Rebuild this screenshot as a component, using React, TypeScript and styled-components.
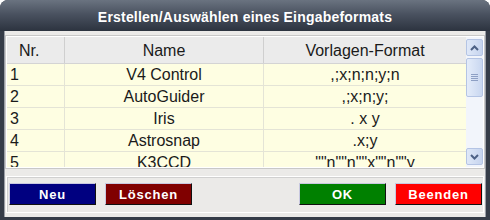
import styled, { createGlobalStyle } from "styled-components";

const GlobalStyle = createGlobalStyle`
  html, body {
    margin: 0;
    padding: 0;
    background: #ffffff;
  }
  * {
    box-sizing: border-box;
  }
`;

type Format = {
  nr: number;
  name: string;
  pattern: string;
};

const formats: Format[] = [
  { nr: 1, name: "V4 Control", pattern: ",;x;n;n;y;n" },
  { nr: 2, name: "AutoGuider", pattern: ",;x;n;y;" },
  { nr: 3, name: "Iris", pattern: ". x y" },
  { nr: 4, name: "Astrosnap", pattern: ".x;y" },
  { nr: 5, name: "K3CCD", pattern: '""n""n""x""n""y' },
];

type Tone = "navy" | "maroon" | "green" | "red";

const toneColors: Record<Tone, string> = {
  navy: "#000080",
  maroon: "#800000",
  green: "#008000",
  red: "#ff0000",
};

export default function App() {
  return (
    <>
      <GlobalStyle />
      <StyledWindow>
        <StyledTitleBar>Erstellen/Auswählen eines Eingabeformats</StyledTitleBar>
        <StyledClient>
          <StyledListFrame>
            <StyledTable>
              <StyledHeaderRow>
                <StyledHeaderCell $align="left">Nr.</StyledHeaderCell>
                <StyledHeaderCell>Name</StyledHeaderCell>
                <StyledHeaderCell $last>Vorlagen-Format</StyledHeaderCell>
              </StyledHeaderRow>
              <StyledBody>
                {formats.map((f) => (
                  <StyledRow key={f.nr}>
                    <StyledCell $align="left">{f.nr}</StyledCell>
                    <StyledCell>{f.name}</StyledCell>
                    <StyledCell $last>{f.pattern}</StyledCell>
                  </StyledRow>
                ))}
              </StyledBody>
            </StyledTable>
            <StyledScrollbar>
              <StyledScrollButton>
                <Chevron up />
              </StyledScrollButton>
              <StyledTrack>
                <StyledThumb>
                  <StyledGrip />
                </StyledThumb>
              </StyledTrack>
              <StyledScrollButton>
                <Chevron />
              </StyledScrollButton>
            </StyledScrollbar>
          </StyledListFrame>
          <StyledButtonPanel>
            <StyledButtonGroup>
              <StyledButton $tone="navy">Neu</StyledButton>
              <StyledButton $tone="maroon">Löschen</StyledButton>
            </StyledButtonGroup>
            <StyledButtonGroup>
              <StyledButton $tone="green">OK</StyledButton>
              <StyledButton $tone="red">Beenden</StyledButton>
            </StyledButtonGroup>
          </StyledButtonPanel>
        </StyledClient>
      </StyledWindow>
    </>
  );
}

function Chevron({ up }: { up?: boolean }) {
  return (
    <svg width="9" height="6" viewBox="0 0 9 6">
      <path
        d={up ? "M1 5 L4.5 1.5 L8 5" : "M1 1 L4.5 4.5 L8 1"}
        fill="none"
        stroke="#4d6185"
        strokeWidth="2"
      />
    </svg>
  );
}

const StyledWindow = styled.div`
  width: 490px;
  height: 220px;
  display: flex;
  flex-direction: column;
  background: #353c48;
  border-radius: 8px 8px 0 0;
  padding: 0 4px 3px 4px;
  font-family: "Liberation Sans", Arial, sans-serif;
`;

const StyledTitleBar = styled.div`
  height: 31px;
  margin: 0 -4px;
  display: flex;
  align-items: center;
  justify-content: center;
  padding-top: 3px;
  border-radius: 8px 8px 0 0;
  background: linear-gradient(#6a7380 0%, #4a5260 45%, #2c333f 100%);
  color: #ffffff;
  font-size: 14px;
  font-weight: bold;
  letter-spacing: 0.2px;
`;

const StyledClient = styled.div`
  flex: 1;
  display: flex;
  flex-direction: column;
  background: #ebeae8;
  border-left: 1px solid #9a9ea6;
  border-right: 1px solid #9a9ea6;
  padding: 5px 1px 4px 1px;
`;

const StyledListFrame = styled.div`
  height: 132px;
  flex-shrink: 0;
  display: flex;
  border: 1px solid #ffffff;
  box-shadow: 0 0 0 1px #c8c8c8;
  background: #fefee2;
`;

const StyledTable = styled.div`
  flex: 1;
  display: flex;
  flex-direction: column;
  overflow: hidden;
`;

const StyledHeaderRow = styled.div`
  height: 27px;
  flex-shrink: 0;
  display: grid;
  grid-template-columns: 58px 199px 1fr;
  background: #ebebeb;
  border-bottom: 1px solid #d4d4d4;
`;

const StyledHeaderCell = styled.div<{ $align?: "left"; $last?: boolean }>`
  display: flex;
  align-items: center;
  justify-content: ${({ $align }) => ($align === "left" ? "flex-start" : "center")};
  padding-left: ${({ $align }) => ($align === "left" ? "12px" : "0")};
  padding-top: 2px;
  border-right: ${({ $last }) => ($last ? "none" : "1px solid #cfcfcf")};
  font-size: 16px;
  color: #1a1a1a;
`;

const StyledBody = styled.div`
  flex: 1;
  overflow: hidden;
`;

const StyledRow = styled.div`
  height: 22px;
  display: grid;
  grid-template-columns: 58px 199px 1fr;
  border-bottom: 1px solid #e4e4d6;
`;

const StyledCell = styled.div<{ $align?: "left"; $last?: boolean }>`
  display: flex;
  align-items: center;
  justify-content: ${({ $align }) => ($align === "left" ? "flex-start" : "center")};
  padding-left: ${({ $align }) => ($align === "left" ? "3px" : "0")};
  padding-top: 1px;
  border-right: ${({ $last }) => ($last ? "none" : "1px solid #e4e4d6")};
  font-size: 16px;
  color: #1a1a1a;
  white-space: nowrap;
`;

const StyledScrollbar = styled.div`
  width: 17px;
  display: flex;
  flex-direction: column;
  background: #f2f5fb;
  padding: 2px 0 2px 0;
`;

const StyledScrollButton = styled.div`
  height: 17px;
  flex-shrink: 0;
  display: flex;
  align-items: center;
  justify-content: center;
  border: 1px solid #b4c4e4;
  border-radius: 2px;
  background: linear-gradient(90deg, #dfe8f8, #c6d4ee);
`;

const StyledTrack = styled.div`
  flex: 1;
  padding: 2px 0;
`;

const StyledThumb = styled.div`
  height: 39px;
  display: flex;
  align-items: center;
  justify-content: center;
  border: 1px solid #b4c4e4;
  border-radius: 2px;
  background: linear-gradient(90deg, #e4ecfa, #c9d7f0);
`;

const StyledGrip = styled.div`
  width: 7px;
  height: 7px;
  background: repeating-linear-gradient(#8d9fc4 0 1px, transparent 1px 2px);
`;

const StyledButtonPanel = styled.div`
  margin-top: 8px;
  flex: 1;
  display: flex;
  justify-content: space-between;
  align-items: flex-start;
  padding: 6px 1px 0 2px;
  border: 1px solid #ffffff;
  box-shadow: inset 1px 1px 0 #d0d0d0;
`;

const StyledButtonGroup = styled.div`
  display: flex;
  gap: 9px;
`;

const StyledButton = styled.button<{ $tone: Tone }>`
  width: 87px;
  height: 22px;
  padding: 0;
  display: flex;
  align-items: center;
  justify-content: center;
  background: ${({ $tone }) => toneColors[$tone]};
  border: 1px solid;
  border-color: #c8c8e0 #101010 #101010 #c8c8e0;
  color: #ffffff;
  font-family: "Liberation Sans", Arial, sans-serif;
  font-size: 13px;
  font-weight: bold;
  letter-spacing: 0.8px;
`;
